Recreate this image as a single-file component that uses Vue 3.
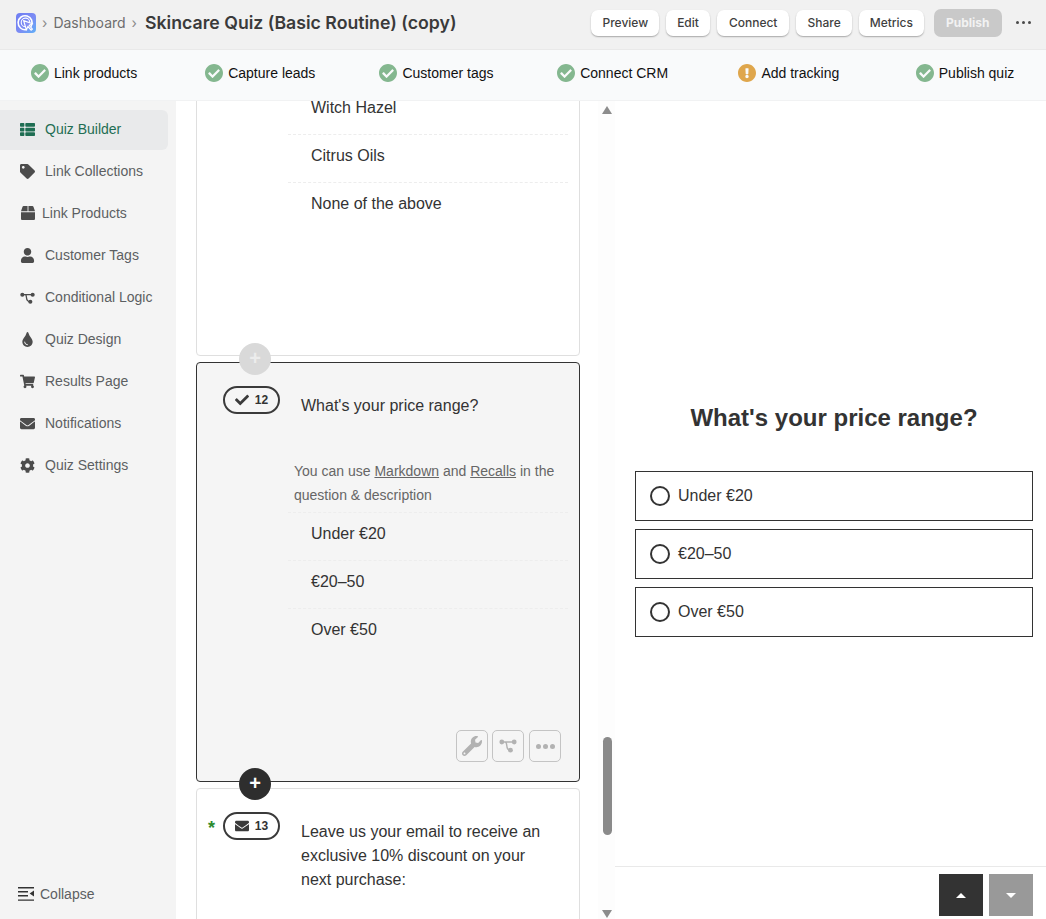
<script setup>
const paths = {
  list: ['0 0 512 512', 'M149.333 216v80c0 13.255-10.745 24-24 24H24c-13.255 0-24-10.745-24-24v-80c0-13.255 10.745-24 24-24h101.333c13.255 0 24 10.745 24 24zM0 376v80c0 13.255 10.745 24 24 24h101.333c13.255 0 24-10.745 24-24v-80c0-13.255-10.745-24-24-24H24c-13.255 0-24 10.745-24 24zM125.333 32H24C10.745 32 0 42.745 0 56v80c0 13.255 10.745 24 24 24h101.333c13.255 0 24-10.745 24-24V56c0-13.255-10.745-24-24-24zm80 448H488c13.255 0 24-10.745 24-24v-80c0-13.255-10.745-24-24-24H205.333c-13.255 0-24 10.745-24 24v80c0 13.255 10.745 24 24 24zm-24-424v80c0 13.255 10.745 24 24 24H488c13.255 0 24-10.745 24-24V56c0-13.255-10.745-24-24-24H205.333c-13.255 0-24 10.745-24 24zm24 264H488c13.255 0 24-10.745 24-24v-80c0-13.255-10.745-24-24-24H205.333c-13.255 0-24 10.745-24 24v80c0 13.255 10.745 24 24 24z'],
  tag: ['0 0 512 512', 'M0 252.118V48C0 21.49 21.49 0 48 0h204.118a48 48 0 0 1 33.941 14.059l211.882 211.882c18.745 18.745 18.745 49.137 0 67.882L293.823 497.941c-18.745 18.745-49.137 18.745-67.882 0L14.059 286.059A48 48 0 0 1 0 252.118zM112 64c-26.51 0-48 21.49-48 48s21.49 48 48 48 48-21.49 48-48-21.49-48-48-48z'],
  box: ['0 0 512 512', 'M509.5 184.6L458.9 32.8C452.4 13.2 434.1 0 413.4 0H272v192h238.7c-.4-2.5-.4-5-1.2-7.4zM240 0H98.6c-20.7 0-39 13.2-45.5 32.8L2.5 184.6c-.8 2.4-.8 4.9-1.2 7.4H240V0zM0 224v240c0 26.5 21.5 48 48 48h416c26.5 0 48-21.5 48-48V224H0z'],
  user: ['0 0 448 512', 'M224 256c70.7 0 128-57.3 128-128S294.7 0 224 0 96 57.3 96 128s57.3 128 128 128zm89.6 32h-16.7c-22.2 10.2-46.9 16-72.9 16s-50.6-5.8-72.9-16h-16.7C60.2 288 0 348.2 0 422.4V464c0 26.5 21.5 48 48 48h352c26.5 0 48-21.5 48-48v-41.6c0-74.2-60.2-134.4-134.4-134.4z'],
  tint: ['0 0 352 512', 'M205.22 22.09c-7.94-28.78-49.44-30.12-58.44 0C100.01 179.85 0 222.72 0 333.91 0 432.35 78.72 512 176 512s176-79.65 176-178.09c0-111.75-99.79-153.34-146.78-311.82zM176 448c-61.75 0-112-50.25-112-112 0-8.84 7.16-16 16-16s16 7.16 16 16c0 44.11 35.89 80 80 80 8.84 0 16 7.16 16 16s-7.16 16-16 16z'],
  cart: ['0 0 576 512', 'M528.12 301.319l47.273-208C578.806 78.301 567.391 64 551.99 64H159.208l-9.166-44.81C147.758 8.021 137.93 0 126.529 0H24C10.745 0 0 10.745 0 24v16c0 13.255 10.745 24 24 24h69.883l70.248 343.435C147.325 417.1 136 435.222 136 456c0 30.928 25.072 56 56 56s56-25.072 56-56c0-15.674-6.447-29.835-16.824-40h209.647C430.447 426.165 424 440.326 424 456c0 30.928 25.072 56 56 56s56-25.072 56-56c0-22.172-12.888-41.332-31.579-50.405l5.517-24.276c3.413-15.018-8.002-29.319-23.403-29.319H218.117l-6.545-32h293.145c11.206 0 20.92-7.754 23.403-18.681z'],
  mail: ['0 0 512 512', 'M502.3 190.8c3.9-3.1 9.7-.2 9.7 4.7V400c0 26.5-21.5 48-48 48H48c-26.5 0-48-21.5-48-48V195.6c0-5 5.7-7.8 9.7-4.7 22.4 17.4 52.1 39.5 154.1 113.6 21.1 15.4 56.7 47.8 92.2 47.6 35.7.3 72-32.8 92.3-47.6 102-74.1 131.6-96.3 154-113.7zM256 320c23.2.4 56.6-29.2 73.4-41.4 132.7-96.3 142.8-104.7 173.4-128.7 5.8-4.5 9.2-11.5 9.2-18.9v-19c0-26.5-21.5-48-48-48H48C21.5 64 0 85.5 0 112v19c0 7.4 3.4 14.3 9.2 18.9 30.6 23.9 40.7 32.4 173.4 128.7 16.8 12.2 50.2 41.8 73.4 41.4z'],
  cog: ['0 0 512 512', 'M487.4 315.7l-42.6-24.6c4.3-23.2 4.3-47 0-70.2l42.6-24.6c4.9-2.8 7.1-8.6 5.5-14-11.1-35.6-30-67.8-54.7-94.6-3.8-4.1-10-5.1-14.8-2.3L380.8 110c-17.9-15.4-38.5-27.3-60.8-35.1V25.8c0-5.6-3.9-10.5-9.4-11.7-36.7-8.2-74.3-7.8-109.2 0-5.5 1.2-9.4 6.1-9.4 11.7V75c-22.2 7.9-42.8 19.8-60.8 35.1L88.7 85.5c-4.9-2.8-11-1.9-14.8 2.3-24.7 26.7-43.6 58.9-54.7 94.6-1.7 5.4.6 11.2 5.5 14L67.3 221c-4.3 23.2-4.3 47 0 70.2l-42.6 24.6c-4.9 2.8-7.1 8.6-5.5 14 11.1 35.6 30 67.8 54.7 94.6 3.8 4.1 10 5.1 14.8 2.3l42.6-24.6c17.9 15.4 38.5 27.3 60.8 35.1v49.2c0 5.6 3.9 10.5 9.4 11.7 36.7 8.2 74.3 7.8 109.2 0 5.5-1.2 9.4-6.1 9.4-11.7v-49.2c22.2-7.9 42.8-19.8 60.8-35.1l42.6 24.6c4.9 2.8 11 1.9 14.8-2.3 24.7-26.7 43.6-58.9 54.7-94.6 1.5-5.5-.7-11.3-5.6-14.1zM256 336c-44.1 0-80-35.9-80-80s35.9-80 80-80 80 35.9 80 80-35.9 80-80 80z'],
  check: ['0 0 512 512', 'M173.898 439.404l-166.4-166.4c-9.997-9.997-9.997-26.206 0-36.204l36.203-36.204c9.997-9.998 26.207-9.998 36.204 0L192 312.69 432.095 72.596c9.997-9.997 26.207-9.997 36.204 0l36.203 36.204c9.997 9.997 9.997 26.206 0 36.204l-294.4 294.401c-9.998 9.997-26.207 9.997-36.204-.001z'],
  wrench: ['0 0 512 512', 'M507.73 109.1c-2.24-9.03-13.54-12.09-20.12-5.51l-74.36 74.36-67.88-11.31-11.31-67.88 74.36-74.36c6.62-6.62 3.43-17.9-5.66-20.16-47.38-11.74-99.55.91-136.58 37.93-39.64 39.64-50.55 97.1-34.05 147.2L18.74 402.76c-24.99 24.99-24.99 65.51 0 90.5 24.99 24.99 65.51 24.99 90.5 0l213.21-213.21c50.12 16.71 107.47 5.68 147.37-34.22 37.07-37.07 49.7-89.32 37.91-136.73zM64 472c-13.25 0-24-10.75-24-24 0-13.26 10.75-24 24-24s24 10.74 24 24c0 13.25-10.75 24-24 24z'],
  ok: ['8 8 496 496', 'M504 256c0 136.967-111.033 248-248 248S8 392.967 8 256 119.033 8 256 8s248 111.033 248 248zM227.314 387.314l184-184c6.248-6.248 6.248-16.379 0-22.627l-22.627-22.627c-6.248-6.249-16.379-6.249-22.628 0L216 308.118l-70.059-70.059c-6.248-6.248-16.379-6.248-22.628 0l-22.627 22.627c-6.248 6.248-6.248 16.379 0 22.627l104 104c6.249 6.249 16.379 6.249 22.628.001z'],
  warn: ['8 8 496 496', 'M504 256c0 136.997-111.043 248-248 248S8 392.997 8 256C8 119.083 119.043 8 256 8s248 111.083 248 248zm-248 50c-25.405 0-46 20.595-46 46s20.595 46 46 46 46-20.595 46-46-20.595-46-46-46zm-43.673-165.346l7.418 136c.347 6.364 5.609 11.346 11.982 11.346h48.546c6.373 0 11.635-4.982 11.982-11.346l7.418-136c.375-6.874-5.098-12.654-11.982-12.654h-63.383c-6.884 0-12.356 5.78-11.981 12.654z'],
}
const headerButtons = ['Preview', 'Edit', 'Connect', 'Share', 'Metrics']
const checklist = [
  { label: 'Link products', icon: 'ok' },
  { label: 'Capture leads', icon: 'ok' },
  { label: 'Customer tags', icon: 'ok' },
  { label: 'Connect CRM', icon: 'ok' },
  { label: 'Add tracking', icon: 'warn' },
  { label: 'Publish quiz', icon: 'ok' },
]
const nav = [
  { label: 'Quiz Builder', icon: 'list', active: true },
  { label: 'Link Collections', icon: 'tag' },
  { label: 'Link Products', icon: 'box', tight: true },
  { label: 'Customer Tags', icon: 'user' },
  { label: 'Conditional Logic', icon: 'logic' },
  { label: 'Quiz Design', icon: 'tint' },
  { label: 'Results Page', icon: 'cart' },
  { label: 'Notifications', icon: 'mail' },
  { label: 'Quiz Settings', icon: 'cog' },
]
const firstOptions = ['Witch Hazel', 'Citrus Oils', 'None of the above']
const priceOptions = ['Under €20', '€20–50', 'Over €50']
</script>

<template>
  <div class="app">
    <header class="topbar">
      <svg class="logo" viewBox="0 0 20 20" aria-hidden="true">
        <defs>
          <linearGradient id="logoGrad" x1="0" y1="0" x2="1" y2="1">
            <stop offset="0" stop-color="#6f7df2" />
            <stop offset="0.55" stop-color="#7c8cf4" />
            <stop offset="1" stop-color="#5fb0f7" />
          </linearGradient>
        </defs>
        <rect width="20" height="20" rx="4" fill="url(#logoGrad)" />
        <path d="M15.2 13.2A7 7 0 1 0 10.4 16.6" fill="none" stroke="#fff" stroke-width="1.6" stroke-linecap="round" />
        <path d="M9.7 13.7A4.3 4.3 0 1 1 13.8 9" fill="none" stroke="#fff" stroke-width="1.1" stroke-linecap="round" />
        <path d="M7.6 7.6l9 3.2-3.4 1.5 3.2 3.8-1.3 1.1-3.2-3.7-1.5 3.3z" fill="#8590f4" stroke="#fff" stroke-width="1.2" stroke-linejoin="round" />
      </svg>
      <span class="crumb-sep">›</span>
      <span class="crumb">Dashboard</span>
      <span class="crumb-sep">›</span>
      <h1 class="title">Skincare Quiz (Basic Routine) (copy)</h1>
      <div class="actions">
        <button v-for="b in headerButtons" :key="b" class="btn" type="button">{{ b }}</button>
        <button class="btn publish" type="button">Publish</button>
        <span class="dots"><i></i><i></i><i></i></span>
      </div>
    </header>

    <div class="checklist">
      <div v-for="c in checklist" :key="c.label" class="check-item">
        <svg :class="['check-icon', c.icon]" :viewBox="paths[c.icon][0]"><path :d="paths[c.icon][1]" /></svg>
        <span>{{ c.label }}</span>
      </div>
    </div>

    <div class="main">
      <aside class="sidebar">
        <nav class="nav">
          <a v-for="n in nav" :key="n.label" :class="['nav-item', { active: n.active, tight: n.tight }]">
            <span class="nav-icon">
              <svg v-if="n.icon === 'logic'" class="logic" viewBox="0 0 16 16">
                <circle cx="2.5" cy="5" r="2.2" /><circle cx="13.5" cy="5" r="2.2" /><circle cx="11" cy="12.5" r="2.2" />
                <path d="M2.5 5h11M5.5 5c1 0 1.2 1 1.4 3 .2 3 1 4.5 4.1 4.5" fill="none" stroke="currentColor" stroke-width="1.4" />
              </svg>
              <svg v-else :viewBox="paths[n.icon][0]"><path :d="paths[n.icon][1]" /></svg>
            </span>
            <span>{{ n.label }}</span>
          </a>
        </nav>
        <div class="collapse">
          <svg viewBox="0 0 16 16" class="collapse-icon">
            <path d="M0 1h16v1.4H0zM0 5h10v1.4H0zM0 9h10v1.4H0zM0 13.4h16v1.4H0zM16 4.6v5.8L11.6 7.5z" />
          </svg>
          <span>Collapse</span>
        </div>
      </aside>

      <section class="builder">
        <div class="cards">
          <div class="card first">
            <ul class="options">
              <li v-for="o in firstOptions" :key="o">{{ o }}</li>
            </ul>
            <button class="add light" type="button">+</button>
          </div>

          <div class="card selected">
            <div class="q-head">
              <span class="badge"><svg class="badge-icon" :viewBox="paths.check[0]"><path :d="paths.check[1]" /></svg><b>12</b></span>
              <p class="q-text">What's your price range?</p>
            </div>
            <p class="hint">You can use <u>Markdown</u> and <u>Recalls</u> in the question &amp; description</p>
            <ul class="options bordered">
              <li v-for="o in priceOptions" :key="o">{{ o }}</li>
            </ul>
            <div class="tools">
              <button class="tool" type="button"><svg :viewBox="paths.wrench[0]" class="wrench"><path :d="paths.wrench[1]" /></svg></button>
              <button class="tool" type="button">
                <svg viewBox="0 0 18 16" class="tool-logic">
                  <circle cx="2.8" cy="4" r="2.4" /><circle cx="15.2" cy="4" r="2.4" /><circle cx="11.5" cy="12.2" r="2.4" />
                  <path d="M3 4h12M6 4c1.4 0 1.6 1.2 1.8 3.6.2 3 1 4.6 3.7 4.6" fill="none" stroke="currentColor" stroke-width="1.4" />
                </svg>
              </button>
              <button class="tool" type="button"><span class="tool-dots"><i></i><i></i><i></i></span></button>
            </div>
            <button class="add dark" type="button">+</button>
          </div>

          <div class="card last">
            <div class="q-head">
              <span class="star">*</span>
              <span class="badge"><svg class="badge-icon mail" :viewBox="paths.mail[0]"><path :d="paths.mail[1]" /></svg><b>13</b></span>
              <p class="q-text multi">Leave us your email to receive an exclusive 10% discount on your next purchase:</p>
            </div>
          </div>
        </div>

        <div class="scrollbar">
          <span class="arrow up"></span>
          <span class="thumb"></span>
          <span class="arrow down"></span>
        </div>
      </section>

      <section class="preview">
        <div class="preview-body">
          <h2 class="preview-title">What's your price range?</h2>
          <label v-for="o in priceOptions" :key="o" class="answer">
            <span class="radio"></span>
            <span>{{ o }}</span>
          </label>
        </div>
        <footer class="preview-foot">
          <button class="step prev" type="button"><span class="tri up-tri"></span></button>
          <button class="step next" type="button"><span class="tri down-tri"></span></button>
        </footer>
      </section>
    </div>
  </div>
</template>

<style>
html, body { margin: 0; padding: 0; overflow: hidden; background: #fff; }
</style>

<style scoped>
* { box-sizing: border-box; }
.app { width: 1046px; height: 919px; display: flex; flex-direction: column; overflow: hidden; font-family: "Liberation Sans", Arial, sans-serif; color: #333; }

.topbar { height: 50px; flex: none; display: flex; align-items: center; padding: 0 15px 4px 16px; background: #f1f1f1; border-bottom: 1px solid #e9e9e9; font-family: Inter, "Liberation Sans", sans-serif; }
.logo { width: 20px; height: 20px; flex: none; }
.crumb-sep { margin-left: 6px; color: #8a8a8a; font-size: 14px; }
.crumb { margin-left: 6px; font-size: 14px; color: #6d6d6d; }
.title { margin: 0 0 0 8px; font-size: 17.7px; font-weight: 600; color: #3a3a3a; white-space: nowrap; }
.actions { margin-left: auto; display: flex; align-items: center; gap: 7px; }
.btn { height: 26px; padding: 0 11px; border: 0; border-radius: 7px; background: #fff; color: #3f3f3f; font: 500 12px Inter, "Liberation Sans", sans-serif; box-shadow: 0 1px 1.5px rgba(0, 0, 0, .3); }
.btn:nth-child(3) { padding: 0 12px; }
.btn.publish { height: 28px; margin-left: 3px; padding: 0 12px; background: #c9c9c9; color: #f2f2f2; font-weight: 700; box-shadow: none; }
.dots { margin-left: 7px; display: flex; gap: 2.5px; }
.dots i { width: 3.5px; height: 3.5px; border-radius: 50%; background: #4a4a4a; }

.checklist { height: 51px; flex: none; margin-left: -4px; padding-bottom: 4px; display: grid; grid-template-columns: repeat(6, 176.2px); background: #f9fafb; border-bottom: 1px solid #f1f2f3; }
.check-item { display: flex; align-items: center; justify-content: center; gap: 5px; font-size: 14px; color: #111; }
.check-icon { width: 18px; height: 18px; }
.check-icon.ok { fill: #84b78f; }
.check-icon.warn { fill: #dfa64c; }

.main { flex: 1; min-height: 0; display: flex; }

.sidebar { width: 176px; flex: none; display: flex; flex-direction: column; justify-content: space-between; background: #f4f4f4; padding: 9px 8px 0 0; }
.nav { display: flex; flex-direction: column; gap: 2px; }
.nav-item { height: 40px; display: flex; align-items: center; gap: 10px; padding: 0 0 2px 20px; border-radius: 0 6px 6px 0; font-size: 14px; color: #5c5f62; }
.nav-item.tight { gap: 7px; }
.nav-item.active { background: #e9eaeb; color: #1f6e53; }
.nav-icon { width: 15px; height: 16px; display: flex; align-items: center; justify-content: center; color: #4c4c4c; }
.nav-icon svg { width: 15px; height: 15px; fill: #4c4c4c; }
.nav-item.active .nav-icon svg { fill: #1f6e53; }
.nav-item.tight .nav-icon svg { width: 14px; height: 14px; }
.nav-icon svg.logic { width: 15px; height: 15px; fill: #4c4c4c; }
.collapse { display: flex; align-items: center; gap: 6px; padding: 0 0 17px 18px; font-size: 14px; color: #5c5f62; }
.collapse-icon { width: 16px; height: 16px; fill: #333; }

.builder { width: 439px; flex: none; display: flex; background: #fff; overflow: hidden; }
.cards { flex: 1; min-width: 0; padding: 0 18px 0 20px; display: flex; flex-direction: column; gap: 6px; }
.card { position: relative; flex: none; width: 384px; border: 1px solid #dfdfdf; border-radius: 4px; background: #fff; }
.card.first { height: 296px; margin-top: -41px; padding: 26px 11px 0 91px; }
.card.selected { height: 420px; padding: 23px 11px 0 26px; background: #f5f5f5; border-color: #333; }
.card.last { height: 200px; padding: 23px 11px 0 11px; }

.options { list-style: none; margin: 0; padding: 0; font-size: 16px; color: #333; }
.options li { height: 48px; padding: 0 0 6px 23px; display: flex; align-items: center; border-bottom: 1px dashed #ededed; }
.options li:last-child { border-bottom: 0; }
.options.bordered { margin: 5px 0 0 65px; border-top: 1px dashed #ededed; }

.q-head { display: flex; align-items: flex-start; }
.badge { width: 57px; height: 28px; flex: none; display: flex; align-items: center; justify-content: center; gap: 6px; border: 2px solid #3a3a3a; border-radius: 14px; font-size: 12px; color: #333; }
.badge b { font-weight: 700; }
.badge-icon { width: 14px; height: 14px; fill: #3a3a3a; }
.star { width: 15px; flex: none; color: #2e8b2e; font-size: 18px; font-weight: 700; line-height: 32px; }
.q-text { margin: 8px 0 0 21px; font-size: 16px; line-height: 24px; color: #333; }
.q-text.multi { width: 250px; }
.hint { margin: 41px 0 0 71px; width: 270px; font-size: 14px; line-height: 24px; color: #666; }

.tools { position: absolute; right: 18px; top: 367px; display: flex; gap: 4px; }
.tool { width: 32px; height: 32px; padding: 0; display: flex; align-items: center; justify-content: center; border: 1px solid #c4c4c4; border-radius: 5px; background: transparent; color: #b2b2b2; }
.tool:last-child { margin-left: 1px; }
.wrench { width: 20px; height: 20px; fill: #b2b2b2; }
.tool-logic { width: 18px; height: 16px; fill: #b2b2b2; }
.tool-dots { display: flex; gap: 2px; }
.tool-dots i { width: 5px; height: 5px; border-radius: 50%; background: #b2b2b2; }

.add { position: absolute; left: 42px; width: 32px; height: 32px; padding: 0 0 2px; border: 0; border-radius: 50%; color: #fff; font: 700 20px/30px "Liberation Sans", sans-serif; z-index: 2; }
.add.light { bottom: -20px; background: #d9d9d9; color: #ececec; }
.add.dark { bottom: -19px; background: #2e2e2e; }

.scrollbar { width: 17px; flex: none; position: relative; display: flex; flex-direction: column; justify-content: space-between; align-items: center; padding: 5px 0 1px; background: #fdfdfd; }
.arrow { width: 0; height: 0; border-left: 5px solid transparent; border-right: 5px solid transparent; }
.arrow.up { border-bottom: 8px solid #8c8c8c; }
.arrow.down { border-top: 8px solid #8c8c8c; }
.thumb { position: absolute; left: 5px; top: 636px; width: 9px; height: 98px; border-radius: 5px; background: #8a8a8a; }

.preview { flex: 1; min-width: 0; display: flex; flex-direction: column; background: #fff; }
.preview-body { flex: 1; padding: 302px 13px 0 20px; display: flex; flex-direction: column; gap: 8px; }
.preview-title { margin: 0 0 30px; height: 30px; font-size: 24px; line-height: 30px; font-weight: 700; text-align: center; color: #333; }
.answer { height: 50px; display: flex; align-items: center; gap: 8px; padding-left: 14px; border: 1px solid #333; font-size: 16px; color: #333; }
.radio { width: 20px; height: 20px; border: 2px solid #333; border-radius: 50%; flex: none; }
.preview-foot { height: 53px; flex: none; display: flex; justify-content: flex-end; gap: 6px; padding: 7px 13px 3px; border-top: 1px solid #e9e9e9; }
.step { width: 44px; height: 42px; border: 0; padding: 0; display: flex; align-items: center; justify-content: center; }
.step.prev { background: #333; }
.step.next { background: #999; }
.tri { width: 0; height: 0; border-left: 5px solid transparent; border-right: 5px solid transparent; }
.up-tri { border-bottom: 5px solid #fff; }
.down-tri { border-top: 5px solid #fff; }
</style>
